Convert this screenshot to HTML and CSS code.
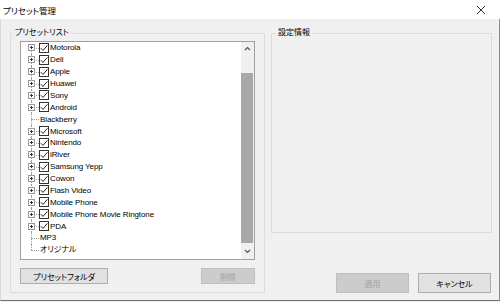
FILE: index.html
```html
<!DOCTYPE html>
<html lang="ja">
<head>
<meta charset="utf-8">
<link rel="stylesheet" href="styles.css">
</head>
<body>
<div class="win">
  <div class="titlebar">
    <span class="title">プリセット管理</span>
    <svg class="close" width="10" height="10" viewBox="0 0 10 10"><path d="M1 1L9 9M9 1L1 9" stroke="#333" stroke-width="1"/></svg>
  </div>
  <div class="body">
    <fieldset class="group left">
      <legend>プリセットリスト</legend>
      <div class="group-inner">
        <div class="listbox">
          <div class="tree">
            <div class="row first"><span class="g"><span class="exp"></span></span><svg class="chk" viewBox="0 0 10 10"><rect x=".5" y=".5" width="9" height="9" fill="#fff" stroke="#333"/><path d="M1.8 5.2L4 7.4L8.4 2.4" fill="none" stroke="#222"/></svg><span class="lbl">Motorola</span></div>
            <div class="row"><span class="g"><span class="exp"></span></span><svg class="chk" viewBox="0 0 10 10"><rect x=".5" y=".5" width="9" height="9" fill="#fff" stroke="#333"/><path d="M1.8 5.2L4 7.4L8.4 2.4" fill="none" stroke="#222"/></svg><span class="lbl">Dell</span></div>
            <div class="row"><span class="g"><span class="exp"></span></span><svg class="chk" viewBox="0 0 10 10"><rect x=".5" y=".5" width="9" height="9" fill="#fff" stroke="#333"/><path d="M1.8 5.2L4 7.4L8.4 2.4" fill="none" stroke="#222"/></svg><span class="lbl">Apple</span></div>
            <div class="row"><span class="g"><span class="exp"></span></span><svg class="chk" viewBox="0 0 10 10"><rect x=".5" y=".5" width="9" height="9" fill="#fff" stroke="#333"/><path d="M1.8 5.2L4 7.4L8.4 2.4" fill="none" stroke="#222"/></svg><span class="lbl">Huawei</span></div>
            <div class="row"><span class="g"><span class="exp"></span></span><svg class="chk" viewBox="0 0 10 10"><rect x=".5" y=".5" width="9" height="9" fill="#fff" stroke="#333"/><path d="M1.8 5.2L4 7.4L8.4 2.4" fill="none" stroke="#222"/></svg><span class="lbl">Sony</span></div>
            <div class="row"><span class="g"><span class="exp"></span></span><svg class="chk" viewBox="0 0 10 10"><rect x=".5" y=".5" width="9" height="9" fill="#fff" stroke="#333"/><path d="M1.8 5.2L4 7.4L8.4 2.4" fill="none" stroke="#222"/></svg><span class="lbl">Android</span></div>
            <div class="row"><span class="g"></span><span class="lbl">Blackberry</span></div>
            <div class="row"><span class="g"><span class="exp"></span></span><svg class="chk" viewBox="0 0 10 10"><rect x=".5" y=".5" width="9" height="9" fill="#fff" stroke="#333"/><path d="M1.8 5.2L4 7.4L8.4 2.4" fill="none" stroke="#222"/></svg><span class="lbl">Microsoft</span></div>
            <div class="row"><span class="g"><span class="exp"></span></span><svg class="chk" viewBox="0 0 10 10"><rect x=".5" y=".5" width="9" height="9" fill="#fff" stroke="#333"/><path d="M1.8 5.2L4 7.4L8.4 2.4" fill="none" stroke="#222"/></svg><span class="lbl">Nintendo</span></div>
            <div class="row"><span class="g"><span class="exp"></span></span><svg class="chk" viewBox="0 0 10 10"><rect x=".5" y=".5" width="9" height="9" fill="#fff" stroke="#333"/><path d="M1.8 5.2L4 7.4L8.4 2.4" fill="none" stroke="#222"/></svg><span class="lbl">iRiver</span></div>
            <div class="row"><span class="g"><span class="exp"></span></span><svg class="chk" viewBox="0 0 10 10"><rect x=".5" y=".5" width="9" height="9" fill="#fff" stroke="#333"/><path d="M1.8 5.2L4 7.4L8.4 2.4" fill="none" stroke="#222"/></svg><span class="lbl">Samsung Yepp</span></div>
            <div class="row"><span class="g"><span class="exp"></span></span><svg class="chk" viewBox="0 0 10 10"><rect x=".5" y=".5" width="9" height="9" fill="#fff" stroke="#333"/><path d="M1.8 5.2L4 7.4L8.4 2.4" fill="none" stroke="#222"/></svg><span class="lbl">Cowon</span></div>
            <div class="row"><span class="g"><span class="exp"></span></span><svg class="chk" viewBox="0 0 10 10"><rect x=".5" y=".5" width="9" height="9" fill="#fff" stroke="#333"/><path d="M1.8 5.2L4 7.4L8.4 2.4" fill="none" stroke="#222"/></svg><span class="lbl">Flash Video</span></div>
            <div class="row"><span class="g"><span class="exp"></span></span><svg class="chk" viewBox="0 0 10 10"><rect x=".5" y=".5" width="9" height="9" fill="#fff" stroke="#333"/><path d="M1.8 5.2L4 7.4L8.4 2.4" fill="none" stroke="#222"/></svg><span class="lbl">Mobile Phone</span></div>
            <div class="row"><span class="g"><span class="exp"></span></span><svg class="chk" viewBox="0 0 10 10"><rect x=".5" y=".5" width="9" height="9" fill="#fff" stroke="#333"/><path d="M1.8 5.2L4 7.4L8.4 2.4" fill="none" stroke="#222"/></svg><span class="lbl">Mobile Phone Movie Ringtone</span></div>
            <div class="row"><span class="g"><span class="exp"></span></span><svg class="chk" viewBox="0 0 10 10"><rect x=".5" y=".5" width="9" height="9" fill="#fff" stroke="#333"/><path d="M1.8 5.2L4 7.4L8.4 2.4" fill="none" stroke="#222"/></svg><span class="lbl">PDA</span></div>
            <div class="row"><span class="g"></span><span class="lbl">MP3</span></div>
            <div class="row last"><span class="g"></span><span class="lbl">オリジナル</span></div>
          </div>
          <div class="sb">
            <div class="sb-btn up"><svg width="7" height="5" viewBox="0 0 7 5"><path d="M1 4L3.5 1.5L6 4" fill="none" stroke="#555" stroke-width="1.2"/></svg></div>
            <div class="sb-gap"></div>
            <div class="thumb"></div>
            <div class="sb-btn down"><svg width="7" height="5" viewBox="0 0 7 5"><path d="M1 1L3.5 3.5L6 1" fill="none" stroke="#555" stroke-width="1.2"/></svg></div>
          </div>
        </div>
        <div class="btnrow">
          <button class="btn folder">プリセットフォルダ</button>
          <button class="btn del" disabled>削除</button>
        </div>
      </div>
    </fieldset>
    <div class="rightcol">
      <fieldset class="group right">
        <legend>設定情報</legend>
      </fieldset>
      <div class="btnrow2">
        <button class="btn big" disabled>適用</button>
        <button class="btn big">キャンセル</button>
      </div>
    </div>
  </div>
</div>
</body>
</html>
```
FILE: styles.css
```css
html, body {
  margin: 0;
  background: #f0f0f0;
}
body {
  font-family: "Liberation Sans", "Noto Sans CJK JP", sans-serif;
  font-size: 8px;
  font-feature-settings: "palt";
  color: #000;
}
.win {
  width: 500px;
  height: 301px;
  display: flex;
  flex-direction: column;
}
.titlebar {
  height: 19px;
  flex: none;
  background: #fff;
  display: flex;
  align-items: center;
  justify-content: space-between;
  padding: 0 14px 0 3px;
  box-sizing: border-box;
}
.title {
  font-size: 8.5px;
}
.close {
  display: block;
}
.body {
  flex: 1;
  display: flex;
  align-items: flex-start;
  padding: 9px 0 0 9px;
  border-left: 1px solid #d9d9d9;
  border-right: 1px solid #8c8c8c;
  border-bottom: 1px solid #6e6e6e;
}
.group {
  margin: 0;
  padding: 0;
  border: 1px solid #dcdcdc;
  min-width: 0;
  box-sizing: border-box;
}
.group legend {
  padding: 0 2px;
  line-height: 10px;
  height: 10px;
  font-size: 8px;
}
.left {
  width: 255px;
  height: 265px;
  flex: none;
}
.left legend {
  margin-left: 2px;
}
.group-inner {
  padding: 3px 9px 0;
}
.listbox {
  height: 219px;
  border: 1px solid #a0a0a0;
  background: #fff;
  display: flex;
  box-sizing: border-box;
}
.tree {
  flex: 1;
  padding: 0 0 0 7px;
}
.row {
  height: 11.88px;
  display: flex;
  align-items: center;
}
.g {
  position: relative;
  width: 11px;
  align-self: stretch;
  flex: none;
}
.g::before {
  content: "";
  position: absolute;
  left: 3px;
  top: 0;
  bottom: 0;
  border-left: 1px dotted #a0a0a0;
}
.first .g::before {
  top: 50%;
}
.last .g::before {
  bottom: 50%;
}
.g::after {
  content: "";
  position: absolute;
  left: 3px;
  right: 0;
  top: 50%;
  border-top: 1px dotted #a0a0a0;
}
.exp {
  position: absolute;
  left: 0;
  top: 50%;
  margin-top: -3.5px;
  width: 7px;
  height: 7px;
  box-sizing: border-box;
  border: 1px solid #9a9a9a;
  background:
    linear-gradient(#333, #333) center / 3px 1px no-repeat,
    linear-gradient(#333, #333) center / 1px 3px no-repeat,
    #fff;
  z-index: 1;
}
.chk {
  width: 10px;
  height: 10px;
  flex: none;
  display: block;
}
.lbl {
  margin-left: 1px;
  letter-spacing: -0.1px;
  white-space: nowrap;
  line-height: 11px;
}
.sb {
  width: 13px;
  flex: none;
  display: flex;
  flex-direction: column;
  background: #f0f0f0;
}
.sb-btn {
  display: flex;
  align-items: center;
  justify-content: center;
  flex: none;
}
.sb-btn svg {
  display: block;
}
.up {
  height: 13px;
}
.sb-gap {
  height: 18px;
  flex: none;
}
.thumb {
  height: 170px;
  flex: none;
  background: #a8a8a8;
  margin-right: 1px;
}
.down {
  height: 16px;
}
.btnrow {
  display: flex;
  justify-content: space-between;
  margin-top: 8px;
}
.btn {
  font: inherit;
  font-size: 8px;
  height: 16px;
  padding: 0;
  border: 1px solid #adadad;
  background: #e1e1e1;
  color: #000;
  box-sizing: border-box;
}
.btn:disabled {
  background: #cccccc;
  border-color: #bfbfbf;
  color: #a0a0a0;
}
.folder {
  width: 88px;
}
.del {
  width: 54px;
}
.rightcol {
  margin-left: 6px;
  width: 221px;
  display: flex;
  flex-direction: column;
}
.right {
  width: 221px;
  height: 205px;
}
.right legend {
  margin-left: 4px;
}
.btnrow2 {
  display: flex;
  justify-content: flex-end;
  gap: 9px;
  margin-top: 40px;
  padding-right: 1px;
}
.big {
  width: 73px;
  height: 20px;
}
```
